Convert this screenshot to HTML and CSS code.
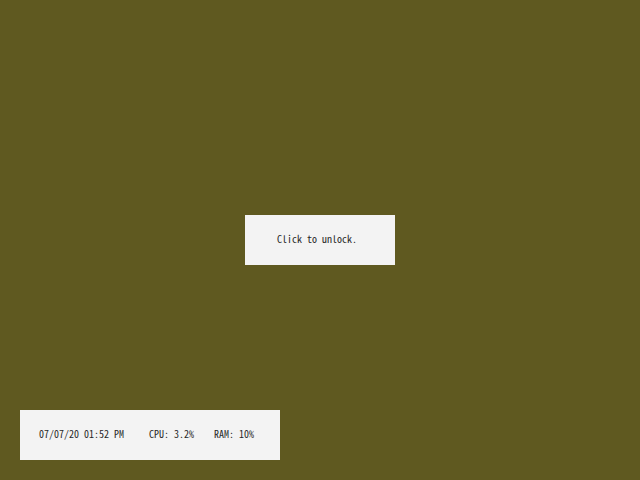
FILE: index.html
```html
<!DOCTYPE html>
<html lang="en">
<head>
<meta charset="utf-8">
<title>Lock screen</title>
<link rel="stylesheet" href="styles.css">
</head>
<body>
<main class="screen">
  <button class="panel unlock" type="button">Click to unlock.</button>
  <footer class="panel status">
    <time class="clock" datetime="2020-07-07T13:52">07/07/20 01:52 PM</time>
    <span class="cpu">CPU: 3.2%</span>
    <span class="ram">RAM: 10%</span>
  </footer>
</main>
</body>
</html>
```

FILE: styles.css
```css
* {
  box-sizing: border-box;
}

body {
  margin: 0;
  background: #5f5920;
  color: #282828;
  font: 10px/12px "Noto Sans Mono CJK JP", "DejaVu Sans Mono", monospace;
  font-feature-settings: "zero";
}

.screen {
  display: grid;
  grid-template-rows: 1fr auto 1fr;
  min-height: 100vh;
  padding: 20px;
}

.panel {
  min-height: 50px;
  background: #f3f3f3;
  color: inherit;
  font: inherit;
  white-space: nowrap;
}

.unlock {
  grid-row: 2;
  justify-self: center;
  min-width: 150px;
  padding: 0 32px 2px;
  border: 0;
  text-align: left;
  cursor: pointer;
}

.status {
  grid-row: 3;
  place-self: end start;
  display: flex;
  align-items: center;
  min-width: 260px;
  padding: 0 19px 2px;
}

.clock {
  min-width: 110px;
}

.cpu {
  min-width: 65px;
}
```
